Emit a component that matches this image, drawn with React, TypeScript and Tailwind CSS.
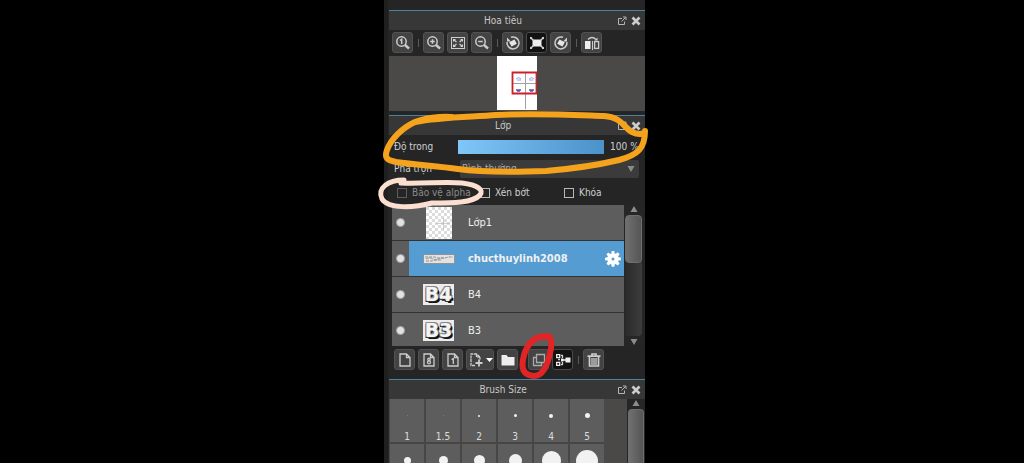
import { ReactNode, useState } from "react";

type Layer = {
  name: string;
  kind: "page" | "strip" | "letters";
};

const layers: Layer[] = [
  { name: "Lớp1", kind: "page" },
  { name: "chucthuylinh2008", kind: "strip" },
  { name: "B4", kind: "letters" },
  { name: "B3", kind: "letters" },
];

const namedBrushes = [
  { label: "1", size: 1, faint: true },
  { label: "1.5", size: 1, faint: true },
  { label: "2", size: 2, faint: false },
  { label: "3", size: 3, faint: false },
  { label: "4", size: 4, faint: false },
  { label: "5", size: 5, faint: false },
];

const largeBrushes = [7, 9, 11, 13, 19, 22];

function Icon({ children }: { children: ReactNode }) {
  return (
    <svg viewBox="0 0 16 16" className="size-4 shrink-0" fill="none" stroke="#cccccc" strokeWidth="1.3" aria-hidden="true">
      {children}
    </svg>
  );
}

function ToolButton({ label, active, wide, children }: { label: string; active?: boolean; wide?: boolean; children: ReactNode }) {
  return (
    <button
      type="button"
      aria-label={label}
      className={`flex h-[21px] shrink-0 items-center justify-center rounded-[3px] border ${wide ? "w-7" : "w-[21px]"} ${
        active ? "border-[#4a4a4a] bg-[#121212]" : "border-[#525252] bg-[#434343]"
      }`}
    >
      {children}
    </button>
  );
}

function Separator() {
  return (
    <span className="flex h-[21px] w-1 shrink-0 items-center justify-center">
      <span className="h-2 w-px bg-[#5a5a5a]" />
    </span>
  );
}

function TitleBar({ title }: { title: string }) {
  return (
    <header className="flex h-5 shrink-0 items-center border-t border-[#4d819f] bg-[#383737] pr-1">
      <h2 className="flex-1 text-center text-[#c8c8c8]">{title}</h2>
      <button type="button" aria-label={`Tách ${title}`} className="mr-1 size-[10px]">
        <svg viewBox="0 0 10 10" className="size-[10px]" fill="none" stroke="#b5b5b5">
          <path d="M5 2.5H1.5v6h6V5.5M4.5 5.5 8.500 1.500M6 1h3v3" />
        </svg>
      </button>
      <button type="button" aria-label={`Đóng ${title}`} className="size-[10px]">
        <svg viewBox="0 0 10 10" className="size-[10px]" stroke="#cccccc" strokeWidth="2.6">
          <path d="m1.5 1.5 7 7m0-7-7 7" />
        </svg>
      </button>
    </header>
  );
}

function Magnifier({ children }: { children: ReactNode }) {
  return (
    <Icon>
      <circle cx="6.5" cy="6.5" r="4.7" strokeWidth="1.5" />
      <path d="m10 10 4 3.500" strokeWidth="2.4" />
      {children}
    </Icon>
  );
}

function NavigatorPanel() {
  return (
    <section>
      <TitleBar title="Hoa tiêu" />
      <div className="flex h-[26px] items-start gap-[3px] pt-[2px] pl-[3px]">
        <ToolButton label="Kích thước thật">
          <Magnifier>
            <path d="m5 5.3 1.700-1V9" strokeWidth="1.500" />
          </Magnifier>
        </ToolButton>
        <Separator />
        <ToolButton label="Phóng to">
          <Magnifier>
            <path d="M4.200 6.500h4.600M6.500 4.200v4.600" strokeWidth="1.500" />
          </Magnifier>
        </ToolButton>
        <ToolButton label="Vừa cửa sổ">
          <Icon>
            <rect x="1.5" y="2.5" width="13" height="11" strokeWidth="1" />
            <path d="m3.500 4.500 3 2.500m6-2.500-3 2.500m-6 4.500 3-2.500m6 2.500-3-2.500" />
            <path d="M3 4h3L3 7zM13 4h-3l3 3zM3 12h3L3 9zM13 12h-3l3-3z" fill="#d2d2d2" stroke="none" />
          </Icon>
        </ToolButton>
        <ToolButton label="Thu nhỏ">
          <Magnifier>
            <path d="M4.200 6.500h4.600" strokeWidth="1.500" />
          </Magnifier>
        </ToolButton>
        <Separator />
        <ToolButton label="Xoay trái">
          <Icon>
            <path d="M6 2.300A6 6 0 1 1 2.100 7" strokeWidth="1.500" />
            <path d="M2 2.500v4h4z" fill="#d2d2d2" stroke="none" />
            <rect x="5" y="5.5" width="6" height="5" transform="rotate(-28 8 8)" fill="#e6e6e6" stroke="none" />
          </Icon>
        </ToolButton>
        <ToolButton label="Đặt lại góc xoay" active>
          <Icon>
            <rect x="3.5" y="4.5" width="9" height="7" fill="#eeeeee" stroke="none" />
            <path d="m1.500 2.500 3 3m10-3-3 3m-10 8 3-3m10 3-3-3" strokeWidth="1.500" />
            <path d="M1 2h2.500L1 4.500zM15 2h-2.500L15 4.500zM1 14h2.500L1 11.500zM15 14h-2.500l2.500-2.500z" fill="#d2d2d2" stroke="none" />
          </Icon>
        </ToolButton>
        <ToolButton label="Xoay phải">
          <Icon>
            <path d="M10 2.300A6 6 0 1 0 13.900 7" strokeWidth="1.500" />
            <path d="M14 2.500v4h-4z" fill="#d2d2d2" stroke="none" />
            <rect x="5" y="5.5" width="6" height="5" transform="rotate(28 8 8)" fill="#e6e6e6" stroke="none" />
          </Icon>
        </ToolButton>
        <Separator />
        <ToolButton label="Lật ngang">
          <Icon>
            <rect x="1" y="6" width="5.5" height="8" fill="#eeeeee" stroke="none" />
            <rect x="10.6" y="6.6" width="4" height="6.8" />
            <path d="M8.500 6v9" strokeWidth="1" />
            <path d="M4 4.500q4-4 8 0" />
            <path d="M10.500 5.500h3v-3z" fill="#d2d2d2" stroke="none" />
          </Icon>
        </ToolButton>
      </div>
      <div className="flex h-[55px] justify-center bg-[#4a4947]">
        <svg viewBox="0 0 40 54" className="h-[54px] w-10" fill="none">
          <path d="M0 0h40v54H0z" fill="#ffffff" />
          <path d="M28.500 17v36M16 27.500h23" stroke="#a0a0a0" />
          <g stroke="#8ea6e8">
            <path d="M19 23q3-3 5 0m-4 1h4M32 23q3-3 5 0m-5 1h4" />
            <path d="M19 34h5m-4 1h3M32 34h5m-4 1h3" stroke="#5a5aa0" strokeWidth="1.5" />
          </g>
          <path d="M15.500 16.500h24v21h-24z" stroke="#cc2028" strokeWidth="1.8" />
        </svg>
      </div>
    </section>
  );
}

function Thumbnail({ layer }: { layer: Layer }) {
  if (layer.kind === "page") {
    return (
      <svg viewBox="0 0 26 32" className="h-8 w-[26px]">
        <defs>
          <pattern id="checker" width="6" height="6" patternUnits="userSpaceOnUse">
            <path d="M0 0h6v6H0z" fill="#ffffff" />
            <path d="M0 0h3v3H0zM3 3h3v3H3z" fill="#dcdcdc" />
          </pattern>
        </defs>
        <path d="M0 0h26v32H0z" fill="url(#checker)" />
        <path d="M17.500 11v12M10 16.500h14" stroke="#bbbbbb" strokeWidth="0.7" />
      </svg>
    );
  }
  if (layer.kind === "strip") {
    return (
      <svg viewBox="0 0 32 10" className="h-[10px] w-8">
        <path d="M.5.5h31v9H.5z" fill="#e2e2e2" stroke="#888888" strokeWidth="0.8" />
        <path d="M2 3h10l2 1h8l3-1h5M3 5q4-2 7 0t7-1h4M3 7h6l3-1h7" stroke="#8a8a8a" strokeWidth="0.9" fill="none" strokeDasharray="3 1" />
      </svg>
    );
  }
  return (
    <span
      aria-hidden="true"
      className="block h-[21px] w-[31px] bg-[#ececec] text-center text-[19px] leading-[21px] font-bold text-[#f4f4f4] [font-family:'DejaVu_Sans',sans-serif] [text-shadow:-1px_-1px_0_#8a8a8a,1px_-1px_0_#777777,-1px_1px_0_#333333,1px_1px_0_#111111,2px_2px_0_#111111]"
    >
      {layer.name}
    </span>
  );
}

function LayerRow({ layer, selected, onSelect }: { layer: Layer; selected: boolean; onSelect: () => void }) {
  return (
    <li className="flex h-9 shrink-0 border-b border-[#333333] bg-[#5d5d5d]">
      <button type="button" aria-label={`Hiện ${layer.name}`} className="flex w-[17px] shrink-0 items-center justify-center">
        <span className="size-[9px] rounded-full border border-[#a5a5a5] bg-[#e2e2e2]" />
      </button>
      <button
        type="button"
        onClick={onSelect}
        className={`flex min-w-0 flex-1 items-center pr-[3px] text-left text-[11px] text-[#f0f0f0] ${selected ? "bg-[#559cd2] font-bold" : ""}`}
      >
        <span className="flex w-[59px] shrink-0 justify-center">
          <Thumbnail layer={layer} />
        </span>
        <span className="flex-1">{layer.name}</span>
        {selected ? (
          <svg viewBox="0 0 16 16" className="size-4" fill="#ffffff">
            <path
              fillRule="evenodd"
              d="M6.7 0h2.6l.4 2.4 1 .4 2-1.5 1.9 1.9-1.5 2 .4 1 2.4.4v2.6l-2.4.4-.4 1 1.5 2-1.9 1.9-2-1.5-1 .4-.4 2.4H6.7l-.4-2.4-1-.4-2 1.5-1.9-1.9 1.5-2-.4-1L0 9.300V6.700l2.500-.4.4-1-1.500-2 1.900-1.900 2 1.500 1-.4zM8 6.500a1.500 1.500 0 1 0 0 3 1.500 1.500 0 0 0 0-3z"
            />
          </svg>
        ) : null}
      </button>
    </li>
  );
}

function Arrow({ down }: { down?: boolean }) {
  return (
    <svg viewBox="0 0 8 8" className="size-2 shrink-0" fill="#8c8c8c">
      <path d={down ? "M0.500 1h7L4 7z" : "M0.500 7h7L4 1z"} />
    </svg>
  );
}

function LayerPanel() {
  const [opacity, setOpacity] = useState(100);
  const [selected, setSelected] = useState("chucthuylinh2008");

  return (
    <section className="mt-1">
      <TitleBar title="Lớp" />
      <div className="flex h-[23px] items-center pr-1 pl-[5px]">
        <label htmlFor="opacity" className="w-16 shrink-0">
          Độ trong
        </label>
        <input
          id="opacity"
          type="range"
          value={opacity}
          onChange={(e) => setOpacity(Number(e.target.value))}
          className="h-[14px] min-w-0 flex-1 appearance-none bg-linear-to-r from-[#80c6f8] to-[#4b92cb] [&::-webkit-slider-thumb]:w-0 [&::-webkit-slider-thumb]:appearance-none"
        />
        <output htmlFor="opacity" className="w-[37px] shrink-0 pl-[6px] whitespace-nowrap">
          {opacity} %
        </output>
      </div>
      <div className="flex h-[22px] items-center pr-[6px] pl-[5px]">
        <label htmlFor="blend" className="w-[66px] shrink-0">
          Pha trộn
        </label>
        <div className="relative flex-1">
          <select id="blend" className="block h-[18px] w-full appearance-none rounded-[2px] bg-[#3b3b3b] pl-[2px] text-[#a8a8a8]">
            <option>Bình thường</option>
          </select>
          <span className="pointer-events-none absolute top-[5px] right-1">
            <Arrow down />
          </span>
        </div>
      </div>
      <div className="grid h-[25px] grid-cols-[83px_84px_1fr] items-center pl-2">
        <label className="flex items-center gap-[5px] text-[#8a8a8a]">
          <input type="checkbox" disabled className="size-[10px] appearance-none border border-[#5c5c5c]" />
          Bảo vệ alpha
        </label>
        <label className="flex items-center gap-[5px]">
          <input type="checkbox" className="size-[10px] appearance-none border border-[#b8b8b8]" />
          Xén bớt
        </label>
        <label className="flex items-center gap-[5px]">
          <input type="checkbox" className="size-[10px] appearance-none border border-[#b8b8b8]" />
          Khóa
        </label>
      </div>
      <div className="flex h-[141px] pr-[2px] pl-[3px]">
        <ul className="flex flex-1 flex-col overflow-hidden">
          {layers.map((layer) => (
            <LayerRow key={layer.name} layer={layer} selected={layer.name === selected} onSelect={() => setSelected(layer.name)} />
          ))}
        </ul>
        <div className="flex w-[19px] flex-col items-center bg-[#262626]">
          <Arrow />
          <div className="my-[2px] w-[17px] flex-1 rounded bg-linear-to-r from-[#2a2a2a] to-[#3c3c3c]">
            <div className="h-12 rounded border border-[#6e6e6e] bg-linear-to-r from-[#707070] to-[#555555]" />
          </div>
          <Arrow down />
        </div>
      </div>
      <div className="flex h-[27px] items-center gap-[3px] pl-[5px]">
        <ToolButton label="Lớp mới">
          <Icon>
            <path d="M3 2h6.500L13 5.500V14H3zM9.500 2v3.500H13" />
          </Icon>
        </ToolButton>
        <ToolButton label="Lớp 8 bit">
          <Icon>
            <path d="M3 2h6.500L13 5.500V14H3zM9.500 2v3.500H13" />
            <circle cx="8" cy="7.3" r="1.2" />
            <circle cx="8" cy="10.3" r="1.5" />
          </Icon>
        </ToolButton>
        <ToolButton label="Lớp 1 bit">
          <Icon>
            <path d="M3 2h6.500L13 5.500V14H3zM9.500 2v3.500H13M6.500 7.500 8.300 6.500V12" />
          </Icon>
        </ToolButton>
        <ToolButton label="Thêm lớp" wide>
          <Icon>
            <path d="M7 13.500H3V2h5.500L12 5v2.500M8.500 2v3H12" strokeDasharray="3 0.7" />
            <path d="M11 7.500v7M7.500 11h7" strokeWidth="1.8" />
          </Icon>
          <svg viewBox="0 0 7 4" className="ml-[2px] h-1 w-[7px]" fill="#ffffff">
            <path d="M0 0h7L3.500 4z" />
          </svg>
        </ToolButton>
        <ToolButton label="Thư mục mới">
          <Icon>
            <path d="M1.500 3h5l1.500 2h6.500v8.500h-13z" fill="#eeeeee" stroke="none" />
          </Icon>
        </ToolButton>
        <Separator />
        <ToolButton label="Nhân đôi lớp">
          <Icon>
            <path d="M5.500 2.500h8v8h-8zM5.500 5.500h-3v8h8v-3" stroke="#aaaaaa" />
          </Icon>
        </ToolButton>
        <ToolButton label="Gộp lớp" active>
          <Icon>
            <path d="M1.700 2.700h3v3h-3zM1.700 10.300h3v3h-3z" stroke="#eeeeee" />
            <path d="M6 3.500h2M6 12.500h2M7.500 3.500V6m0 4v2.500M3 7.500h2" />
            <path d="M6 8h5" strokeWidth="1.800" />
            <path d="M10.500 5.500h5v5h-5zM6 6.500h2.500v3H6z" fill="#eeeeee" stroke="none" />
          </Icon>
        </ToolButton>
        <Separator />
        <ToolButton label="Xóa lớp">
          <Icon>
            <path d="M1.500 4.200h13M6 4V2h4v2M3.500 5v9h9V5" strokeWidth="1.700" />
            <path d="M6 6v7M8 6v7M10 6v7" />
          </Icon>
        </ToolButton>
      </div>
    </section>
  );
}

function BrushSizePanel() {
  return (
    <section className="mt-[6px] flex min-h-0 flex-1 flex-col">
      <TitleBar title="Brush Size" />
      <div className="flex min-h-0 flex-1 justify-between bg-[#4a4947]">
        <div className="grid auto-rows-[43px] grid-cols-[repeat(6,34px)] gap-[2px] overflow-hidden bg-[#474645] pl-px">
          {namedBrushes.map((brush) => (
            <button key={brush.label} type="button" className="flex flex-col items-center bg-[#5d5d5d] leading-[10px] text-[#dddddd]">
              <span className="flex h-[33px] items-center">
                <span
                  className={`rounded-full ${brush.faint ? "bg-[#858585]" : "bg-[#f2f2f2]"}`}
                  style={{ width: brush.size, height: brush.size }}
                />
              </span>
              {brush.label}
            </button>
          ))}
          {largeBrushes.map((size) => (
            <button key={size} type="button" aria-label={`Brush ${size}`} className="flex flex-col items-center bg-[#5d5d5d]">
              <span className="flex h-[33px] items-center">
                <span className="rounded-full bg-[#f2f2f2]" style={{ width: size, height: size }} />
              </span>
            </button>
          ))}
        </div>
        <div className="flex w-[18px] flex-col items-center bg-[#262626]">
          <Arrow />
          <div className="mt-[2px] w-4 flex-1 rounded-t border border-b-0 border-[#6e6e6e] bg-linear-to-r from-[#707070] to-[#555555]" />
        </div>
      </div>
    </section>
  );
}

function Annotations() {
  return (
    <svg viewBox="0 0 280 400" className="pointer-events-none absolute top-0 -left-[9px] h-[400px] w-[280px]" fill="none" strokeLinecap="round" strokeLinejoin="round">
      <path
        d="M77 117C65 116 49 118 40 122C27 128 16 139 12 150C9 158 12 160 21 162C42 165 62 166 83 169C111 173 143 172 171 171C195 169 223 165 244 160C263 155 270 148 270 131M40 122C65 117 96 117 121 115C159 113 199 115 229 116C247 117 249 128 257 132C263 135 267 134 269 133"
        stroke="#f5a31c"
        strokeWidth="6"
      />
      <path
        d="M26 183C49 184 70 181 87 183C103 185 109 190 105 195C98 203 77 203 57 203C38 208 13 209 7 199C2 188 13 180 29 180"
        stroke="#fbdfd0"
        strokeWidth="5"
      />
      <path
        d="M175 337C162 334 153 342 149 355C145 370 149 375 159 376C170 376 174 360 176 348C177 341 176 337 169 336"
        stroke="#e12426"
        strokeWidth="6"
      />
    </svg>
  );
}

export default function App() {
  return (
    <main className="h-screen overflow-hidden bg-black text-[10px] leading-4 text-[#d0d0d0] [font-family:'DejaVu_Sans_Condensed','DejaVu_Sans',sans-serif]">
      <div className="relative ml-[37.5%] h-full w-[25.5%] min-w-[261px]">
        <div className="flex h-full flex-col border-l-4 border-[#1f1f1f] bg-[#252525] pt-[10px] pl-px">
          <NavigatorPanel />
          <LayerPanel />
          <BrushSizePanel />
        </div>
        <Annotations />
      </div>
    </main>
  );
}
